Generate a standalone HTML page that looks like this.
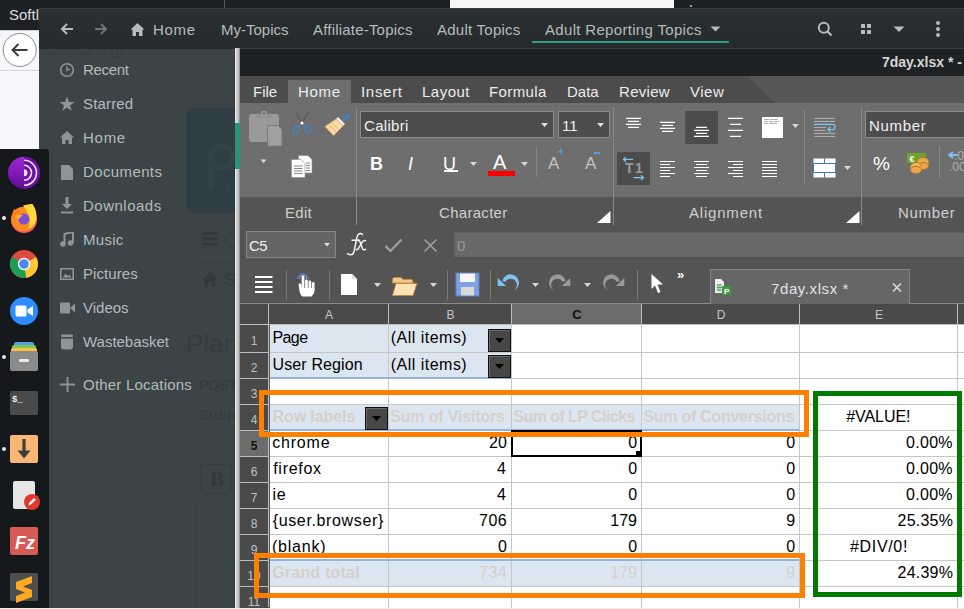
<!DOCTYPE html>
<html><head><meta charset="utf-8">
<style>
*{margin:0;padding:0;box-sizing:border-box}
html,body{width:964px;height:609px;overflow:hidden;background:#3b4547;font-family:"Liberation Sans",sans-serif}
.a{position:absolute}
.t{position:absolute;white-space:nowrap;line-height:1}
</style></head><body>
<!-- browser top bar -->
<div class="a" style="left:0;top:0;width:964px;height:30px;background:#1c2023"></div>
<div class="a" style="left:0;top:30px;width:39px;height:119px;background:#f6f7fb"></div>
<div class="a" style="left:0;top:30px;width:39px;height:1px;background:#d0d0d0"></div>
<div class="t" style="left:9px;top:7px;font-size:15px;color:#dadede">Softl</div>
<div class="a" style="left:450px;top:0;width:224px;height:8px;background:#f6f6f6"></div>
<div class="a" style="left:224px;top:0;width:1px;height:8px;background:#50565a"></div>
<div class="a" style="left:690px;top:5px;width:2px;height:2px;background:#9aa0a0"></div>
<svg class="a" style="left:0;top:30px" width="39" height="42" viewBox="0 30 39 42"><circle cx="19.7" cy="50" r="16.5" fill="#fff" stroke="#8d8d8d" stroke-width="1"/><path d="M27.5 50H13M18.5 44L12.5 50L18.5 56" stroke="#3c3c3c" stroke-width="2" fill="none"/><rect x="0" y="70" width="39" height="1" fill="#d6d6d6"/></svg>

<!-- nautilus header -->
<div class="a" style="left:39px;top:8px;width:925px;height:41px;background:linear-gradient(#2a3032,#252b2d);border-top:1px solid #3a4042"></div>

<!-- nautilus header content -->
<svg class="a" style="left:56px;top:20px" width="22" height="18" viewBox="0 0 22 18"><path d="M17 9H6M11 4L6 9L11 14" stroke="#b4bcbd" stroke-width="2" fill="none"/></svg>
<svg class="a" style="left:90px;top:20px" width="22" height="18" viewBox="0 0 22 18"><path d="M5 9H16M11 4L16 9L11 14" stroke="#6c7476" stroke-width="2" fill="none"/></svg>
<svg class="a" style="left:130px;top:22px" width="15" height="15" viewBox="0 0 15 15"><path d="M7.5 1L14.5 7.5H12.5V14H9V10H6V14H2.5V7.5H0.5Z" fill="#b4bcbd"/></svg>
<div class="t" style="left:153px;top:22px;font-size:15px;letter-spacing:0.7px;color:#b4bcbd">Home</div>
<div class="t" style="left:221px;top:22px;font-size:15px;letter-spacing:0px;color:#b4bcbd">My-Topics</div>
<div class="t" style="left:313px;top:22px;font-size:15px;letter-spacing:0.2px;color:#b4bcbd">Affiliate-Topics</div>
<div class="t" style="left:437px;top:22px;font-size:15px;letter-spacing:0.25px;color:#b4bcbd">Adult Topics</div>
<div class="t" style="left:545px;top:22px;font-size:15px;letter-spacing:0.32px;color:#b4bcbd">Adult Reporting Topics</div>
<svg class="a" style="left:710px;top:26px" width="11" height="6" viewBox="0 0 11 6"><path d="M0.5 0.5H10.5L5.5 5.5Z" fill="#b4bcbd"/></svg>
<div class="a" style="left:532px;top:41px;width:197px;height:2px;background:#2b9a86"></div>
<svg class="a" style="left:814px;top:18px" width="20" height="20" viewBox="0 0 20 20"><circle cx="9.8" cy="9.8" r="5" stroke="#b4bcbd" stroke-width="2" fill="none"/><path d="M13.3 13.3L17.5 17.5" stroke="#b4bcbd" stroke-width="2.2"/></svg>
<svg class="a" style="left:861px;top:24px" width="11" height="11" viewBox="0 0 11 11" fill="#b4bcbd"><rect x="0" y="0" width="4" height="4"/><rect x="6" y="0" width="4" height="4"/><rect x="0" y="6" width="4" height="4"/><rect x="6" y="6" width="4" height="4"/></svg>
<svg class="a" style="left:893px;top:26px" width="12" height="7" viewBox="0 0 12 7"><path d="M0.5 0.5H11.5L6 6Z" fill="#b4bcbd"/></svg>
<svg class="a" style="left:934px;top:20px" width="8" height="18" viewBox="0 0 8 18" fill="#b4bcbd"><circle cx="4" cy="3" r="2"/><circle cx="4" cy="9" r="2"/><circle cx="4" cy="15" r="2"/></svg>
<!-- nautilus sidebar -->
<div class="a" style="left:39px;top:49px;width:196px;height:560px;background:#3b4547"></div>


<!-- page behind (blurred web content) -->
<div class="a" style="left:186px;top:108px;width:60px;height:105px;background:#2f3e45;border-radius:8px"></div>
<svg class="a" style="left:200px;top:135px" width="40" height="60" viewBox="0 0 40 60"><circle cx="22" cy="22" r="11" stroke="#34434a" stroke-width="5.5" fill="none"/><path d="M11 22V54" stroke="#34434a" stroke-width="5.5"/></svg><div class="t" style="left:226px;top:178px;font-size:14px;color:#36444a">c</div>
<div class="a" style="left:186px;top:220px;width:60px;height:86px;border:1px solid #3d4749;border-radius:6px"></div>
<svg class="a" style="left:202px;top:232px" width="16" height="14" viewBox="0 0 16 14" fill="#313b3e"><rect y="0" width="16" height="3"/><rect y="5.3" width="16" height="3"/><rect y="10.6" width="16" height="3"/></svg><div class="a" style="left:198px;top:262px;width:42px;height:1px;background:#353f41"></div>
<div class="t" style="left:224px;top:230px;font-size:19px;color:#343e41">Q</div>
<svg class="a" style="left:202px;top:272px" width="16" height="15" viewBox="0 0 16 15" fill="#313b3e"><path d="M8 0L16 7.5H13.5V15H10V10H6V15H2.5V7.5H0Z"/></svg>
<div class="t" style="left:224px;top:270px;font-size:19px;font-weight:bold;color:#343e41">S</div>
<div class="t" style="left:186px;top:331px;font-size:26px;color:#333d41">Plan</div>
<div class="t" style="left:199px;top:378px;font-size:14px;font-weight:bold;color:#333c40">POST</div>
<div class="t" style="left:199px;top:407px;font-size:15px;font-weight:bold;color:#343d41">Subje</div>
<div class="a" style="left:200px;top:464px;width:32px;height:30px;border:1px solid #343d40;border-radius:4px"></div>
<div class="t" style="left:210px;top:469px;font-size:21px;font-family:'Liberation Serif',serif;font-weight:bold;color:#323b3e">B</div>
<div class="a" style="left:199px;top:499px;width:40px;height:110px;border-left:1px solid #3f494b"></div>

<!-- sidebar items -->
<svg class="a" style="left:45px;top:49px" width="90" height="12" viewBox="45 49 90 12" fill="none" stroke="#353f41" stroke-width="1.4"><path d="M52 57L59 50.5"/><path d="M79.5 50A5 5 0 0 0 89.5 50"/><rect x="112" y="49" width="10" height="8" rx="1"/><path d="M117 50V55"/></svg>
<svg class="a" style="left:59px;top:62px" width="16" height="16" viewBox="0 0 16 16"><circle cx="8" cy="8" r="6.3" stroke="#8c9597" stroke-width="1.6" fill="none"/><path d="M8 4.5V8.3L10.8 6.8" stroke="#8c9597" stroke-width="1.3" fill="none"/></svg>
<svg class="a" style="left:59px;top:96px" width="16" height="16" viewBox="0 0 16 16"><path d="M8 0.5L10 6H15.5L11 9.5L12.8 15L8 11.6L3.2 15L5 9.5L0.5 6H6Z" fill="#8c9597"/></svg>
<svg class="a" style="left:60px;top:131px" width="14" height="13" viewBox="0 0 14 13"><path d="M7 0L14 6.5H12V13H8.5V9H5.5V13H2V6.5H0Z" fill="#8c9597"/></svg>
<svg class="a" style="left:60px;top:165px" width="14" height="15" viewBox="0 0 14 15"><path d="M1 0H9L13 4V15H1Z" fill="#8c9597"/></svg>
<svg class="a" style="left:60px;top:197px" width="14" height="17" viewBox="0 0 14 17"><path d="M5.5 0H8.5V7H12L7 12L2 7H5.5Z" fill="#8c9597"/><rect x="1" y="14.5" width="12" height="2" fill="#8c9597"/></svg>
<svg class="a" style="left:60px;top:232px" width="14" height="15" viewBox="0 0 14 15"><path d="M4 2L13 0V11.5" stroke="#8c9597" stroke-width="2" fill="none"/><circle cx="3" cy="12" r="2.8" fill="#8c9597"/><circle cx="10.5" cy="11" r="2.8" fill="#8c9597"/><rect x="3.5" y="1.5" width="2" height="10" fill="#8c9597"/></svg>
<svg class="a" style="left:60px;top:268px" width="14" height="12" viewBox="0 0 14 12"><path d="M0 0H14V12H0Z M1.6 1.6V10.4H12.4V1.6Z" fill="#8c9597" fill-rule="evenodd"/><path d="M2.5 9.5L5.5 5.5L8 8L9.5 6.5L11.5 9.5Z" fill="#8c9597"/></svg>
<svg class="a" style="left:60px;top:302px" width="15" height="12" viewBox="0 0 15 12"><rect x="0" y="0.5" width="10" height="11" rx="1" fill="#8c9597"/><path d="M10 6L15 1.5V10.5Z" fill="#8c9597"/></svg>
<svg class="a" style="left:60px;top:334px" width="14" height="16" viewBox="0 0 14 16"><rect x="1" y="0.5" width="12" height="2.5" rx="1" fill="#8c9597"/><path d="M1 4.5H13V12.5Q13 15.5 10 15.5H4Q1 15.5 1 12.5Z" fill="#8c9597"/></svg>
<svg class="a" style="left:60px;top:377px" width="15" height="15" viewBox="0 0 15 15"><path d="M7.5 0V15M0 7.5H15" stroke="#8c9597" stroke-width="1.8"/></svg>
<div class="t" style="left:83px;top:62px;font-size:15px;letter-spacing:-0.34px;color:#b3bbbc">Recent</div>
<div class="t" style="left:83px;top:96px;font-size:15px;letter-spacing:0.17px;color:#b3bbbc">Starred</div>
<div class="t" style="left:83px;top:130px;font-size:15px;letter-spacing:0.73px;color:#b3bbbc">Home</div>
<div class="t" style="left:83px;top:164px;font-size:15px;letter-spacing:0.38px;color:#b3bbbc">Documents</div>
<div class="t" style="left:83px;top:198px;font-size:15px;letter-spacing:0.50px;color:#b3bbbc">Downloads</div>
<div class="t" style="left:83px;top:232px;font-size:15px;letter-spacing:0.30px;color:#b3bbbc">Music</div>
<div class="t" style="left:83px;top:266px;font-size:15px;letter-spacing:0.07px;color:#b3bbbc">Pictures</div>
<div class="t" style="left:83px;top:300px;font-size:15px;letter-spacing:0.00px;color:#b3bbbc">Videos</div>
<div class="t" style="left:83px;top:334px;font-size:15px;letter-spacing:-0.02px;color:#b3bbbc">Wastebasket</div>
<div class="t" style="left:83px;top:377px;font-size:15px;letter-spacing:0.21px;color:#b3bbbc">Other Locations</div>
<!-- dock -->
<div class="a" style="left:0;top:149px;width:49px;height:459px;background:#15191c;border-radius:0 3px 0 0"></div>

<!-- dock icons -->
<svg class="a" style="left:0;top:149px" width="49" height="458" viewBox="0 149 49 458">
<defs>
<linearGradient id="tor" x1="0" y1="0" x2="0" y2="1"><stop offset="0" stop-color="#a127dc"/><stop offset="1" stop-color="#620b92"/></linearGradient>
<radialGradient id="ff" cx="0.35" cy="0.7" r="0.8"><stop offset="0" stop-color="#ffbd4f"/><stop offset="0.5" stop-color="#ff8a16"/><stop offset="1" stop-color="#e31587"/></radialGradient>
<linearGradient id="fz" x1="0" y1="0" x2="0" y2="1"><stop offset="0" stop-color="#ffd54a"/><stop offset="1" stop-color="#f77a1b"/></linearGradient>
</defs>
<circle cx="24" cy="172.8" r="16" fill="url(#tor)"/>
<path d="M24 156.8A16 16 0 0 1 24 188.8Z" fill="#6e0fa6"/>
<path d="M24 160.3A12.5 12.5 0 0 1 24 185.3" stroke="#f2e6f8" stroke-width="1.6" fill="none"/>
<path d="M24 165.3A7.5 7.5 0 0 1 24 180.3" stroke="#f2e6f8" stroke-width="1.6" fill="none"/>
<path d="M24 169.3A3.5 3.5 0 0 1 24 176.3Z" fill="#ece0f2"/>
<circle cx="4" cy="218" r="2" fill="#e8e8e8"/>
<circle cx="24" cy="220" r="13" fill="#ff4f6e"/>
<circle cx="23.5" cy="219" r="12.3" fill="#ff8a1e"/>
<path d="M23 205.5Q30 203.5 32.5 204Q37 210 36.5 219Q35 227 28 229Q31 222 29 216Q27 211 23 205.5Z" fill="#ffd93b"/>
<path d="M12 215Q13 210 14.5 208.5L15.5 212L18 209.5L19.5 213Q16 214 13 218Z" fill="#ff7a18"/>
<circle cx="23.8" cy="219" r="5.6" fill="#7b4fd8"/>
<path d="M14 215.5Q19 213.5 23 215.5Q19.5 217 18.5 219.5Q15.5 218 14 215.5Z" fill="#ffab32"/>
<circle cx="24" cy="264" r="14" fill="#dd4b3e"/>
<path d="M24 264L36.1 257A14 14 0 0 1 26 277.9Z" fill="#fcc934"/>
<path d="M24 264L26 277.9A14 14 0 0 1 11.9 257Z" fill="#1e9e54"/>
<path d="M24 264L11.9 257A14 14 0 0 1 10 264Z" fill="#1e9e54"/>
<circle cx="24" cy="264" r="6.2" fill="#fff"/>
<circle cx="24" cy="264" r="4.8" fill="#4a8af4"/>
<circle cx="24" cy="311" r="14" fill="#2d8cff"/>
<rect x="15.5" y="305.5" width="11" height="11" rx="1.5" fill="#fff"/>
<path d="M27.5 309.5L33 306V316L27.5 312.5Z" fill="#fff"/>
<circle cx="4" cy="357" r="2" fill="#e8e8e8"/>
<rect x="14" y="342" width="20" height="5" rx="2" fill="#5b9ce0"/>
<rect x="12" y="345" width="24" height="5" rx="2" fill="#7cc75b"/>
<rect x="11" y="348" width="26" height="5" rx="2" fill="#f7c442"/>
<rect x="10" y="351" width="28" height="20" rx="2" fill="#8b8b8b"/>
<rect x="19" y="359" width="10" height="3" rx="1" fill="#eaeaea"/>
<rect x="10" y="391" width="28" height="24" rx="2" fill="#4a4a4a"/>
<text x="12" y="401.5" font-family="Liberation Mono" font-size="9" font-weight="bold" fill="#eeeeee">$_</text>
<circle cx="4" cy="449" r="2" fill="#e8e8e8"/>
<rect x="10" y="435" width="28" height="28" rx="2" fill="#fbb676"/>
<rect x="22.4" y="439" width="3.2" height="12" fill="#3d3d3d"/><path d="M17.5 450.5H30.5L24 458.5Z" fill="#3d3d3d"/>
<rect x="13" y="481" width="22" height="28" rx="2" fill="#e6e6e6"/>
<circle cx="32" cy="502" r="8" fill="#e03a2f"/>
<path d="M28.5 505.5L29.2 502.8L34 498L35.8 499.8L31 504.6Z" fill="#fff"/>
<rect x="10" y="527" width="28" height="28" rx="2" fill="#d85a55"/>
<text x="15" y="549" font-family="Liberation Sans" font-style="italic" font-weight="bold" font-size="18" fill="#fff">Fz</text>
<rect x="10" y="573" width="28" height="28" rx="2" fill="#4d4d4d"/>
<path d="M16 582L32 576V583L23 586.5L32 590V597L16 603V596L25 592.5L16 589Z" fill="#ffa824"/>
</svg>

<!-- libreoffice -->
<div class="a" style="left:235px;top:48px;width:5px;height:560px;background:linear-gradient(90deg,#e6e6e6,#c4c4c4 60%,#8a8a8a)"></div>
<div class="a" style="left:235px;top:123px;width:5px;height:46px;background:#2a9377"></div>
<div class="a" style="left:0;top:608px;width:964px;height:1px;background:#ececec"></div>
<!-- title bar -->
<div class="a" style="left:240px;top:48px;width:724px;height:28px;background:#1e2224;border-top:1px solid #3a3f42"></div>
<div class="t" style="left:882px;top:55px;font-size:14px;font-weight:bold;color:#d6d6d6">7day.xlsx * -</div>
<!-- menu bar -->
<div class="a" style="left:240px;top:76px;width:724px;height:27px;background:#575757"></div>
<svg class="a" style="left:240px;top:76px" width="540" height="27"><path d="M0 0H508L534 27H0Z" fill="#4c4c4c"/></svg>
<div class="a" style="left:288px;top:80px;width:63px;height:23px;background:#6e6e6e"></div>
<div class="t" style="left:253px;top:84px;font-size:15px;letter-spacing:0px;color:#ececec">File</div>
<div class="t" style="left:298px;top:84px;font-size:15px;letter-spacing:0.7px;color:#ececec">Home</div>
<div class="t" style="left:361px;top:84px;font-size:15px;letter-spacing:0.7px;color:#ececec">Insert</div>
<div class="t" style="left:422px;top:84px;font-size:15px;letter-spacing:0.5px;color:#ececec">Layout</div>
<div class="t" style="left:489px;top:84px;font-size:15px;letter-spacing:0.4px;color:#ececec">Formula</div>
<div class="t" style="left:567px;top:84px;font-size:15px;letter-spacing:0px;color:#ececec">Data</div>
<div class="t" style="left:619px;top:84px;font-size:15px;letter-spacing:0.3px;color:#ececec">Review</div>
<div class="t" style="left:690px;top:84px;font-size:15px;letter-spacing:0.5px;color:#ececec">View</div>
<!-- ribbon -->
<div class="a" style="left:240px;top:103px;width:724px;height:94px;background:#6e6e6e"></div>
<div class="a" style="left:240px;top:197px;width:724px;height:34px;background:#545454"></div>
<div class="a" style="left:240px;top:231px;width:724px;height:73px;background:#545454"></div>

<!-- Edit group -->
<svg class="a" style="left:248px;top:110px" width="36" height="38" viewBox="0 0 36 38">
<rect x="1" y="4" width="30" height="28" rx="3" fill="#9a9a9a"/>
<rect x="8" y="4" width="16" height="4" rx="2" fill="#8e8e8e"/><circle cx="16" cy="4" r="2.5" fill="none" stroke="#9a9a9a" stroke-width="1.5"/>
<path d="M19.5 15.5H30L34 19.5V36H19.5Z" fill="#a0a0a0" stroke="#7a7a7a" stroke-width="1"/>
</svg>
<svg class="a" style="left:291px;top:111px" width="22" height="25" viewBox="0 0 22 25">
<path d="M4.5 1L11 12L17.5 1" stroke="#5c5c5c" stroke-width="1.4" fill="none"/>
<circle cx="11" cy="12" r="1.6" fill="#fff"/>
<ellipse cx="5.5" cy="18.5" rx="2.6" ry="4.2" transform="rotate(25 5.5 18.5)" stroke="#3f86c7" stroke-width="1.4" fill="none"/>
<ellipse cx="16.5" cy="18.5" rx="2.6" ry="4.2" transform="rotate(-25 16.5 18.5)" stroke="#3f86c7" stroke-width="1.4" fill="none"/>
</svg>
<svg class="a" style="left:324px;top:111px" width="27" height="26" viewBox="0 0 27 26">
<path d="M18 9L23.5 2.5L26 5L20 10.5Z" fill="#3f86c7"/>
<path d="M14 6L21 13L19 15L12 8Z" fill="#f2f2f2"/>
<path d="M12 8L19 15L9.5 24.5L1 15.5Z" fill="#fbdca6" stroke="#d9a55e" stroke-width="0.8"/>
<path d="M5 14L12 21M7.5 11.5L14.5 18.5" stroke="#d6a35b" stroke-width="0.7"/>
</svg>
<svg class="a" style="left:260px;top:159px" width="7" height="5"><path d="M0.5 0.5H6.5L3.5 4Z" fill="#dcdcdc"/></svg>
<svg class="a" style="left:291px;top:155px" width="22" height="23" viewBox="0 0 22 23">
<path d="M7.5 0.5H17L21 4.5V18H7.5Z" fill="#fff" stroke="#8a8a8a" stroke-width="0.6"/>
<path d="M0.5 4.5H10L14 8.5V22.5H0.5Z" fill="#fff" stroke="#8a8a8a" stroke-width="0.6"/>
<path d="M3 11H11.5M3 13.5H11.5M3 16H11.5M3 18.5H11.5M15 8H19M15 10.5H19M15 13H19M15 15.5H19" stroke="#777" stroke-width="0.9"/>
</svg>
<div class="a" style="left:356px;top:107px;width:1px;height:118px;background:#8a8a8a"></div>
<!-- Character group -->
<div class="a" style="left:360px;top:111px;width:194px;height:27px;background:#4d4d4d;border:1px solid #8c8c8c"></div>
<div class="t" style="left:364px;top:118px;font-size:15px;letter-spacing:0.3px;color:#f0f0f0">Calibri</div>
<svg class="a" style="left:541px;top:123px" width="7" height="4"><path d="M0 0H7L3.5 4Z" fill="#e0e0e0"/></svg>
<div class="a" style="left:558px;top:111px;width:52px;height:27px;background:#4d4d4d;border:1px solid #8c8c8c"></div>
<div class="t" style="left:562px;top:118px;font-size:15px;color:#f0f0f0">11</div>
<svg class="a" style="left:597px;top:123px" width="7" height="4"><path d="M0 0H7L3.5 4Z" fill="#e0e0e0"/></svg>
<div class="t" style="left:370px;top:155px;font-size:18px;font-weight:bold;color:#fff">B</div>
<div class="t" style="left:408px;top:155px;font-size:18px;font-style:italic;color:#fff">I</div>
<div class="t" style="left:443px;top:155px;font-size:18px;color:#fff">U</div>
<div class="a" style="left:444px;top:170px;width:14px;height:1.5px;background:#fff"></div>
<svg class="a" style="left:470px;top:162px" width="7" height="4"><path d="M0 0H7L3.5 4Z" fill="#d8d8d8"/></svg>
<div class="t" style="left:493px;top:152px;font-size:20px;color:#fff">A</div>
<div class="a" style="left:488px;top:171px;width:27px;height:4.5px;background:#f00"></div>
<svg class="a" style="left:521px;top:162px" width="7" height="4"><path d="M0 0H7L3.5 4Z" fill="#d8d8d8"/></svg>
<div class="a" style="left:536px;top:147px;width:1px;height:30px;background:#888"></div>
<div class="t" style="left:548px;top:155px;font-size:17px;color:#c4c4c4">A</div>
<div class="t" style="left:558px;top:147px;font-size:10px;font-weight:bold;color:#4d9de0">+</div>
<div class="t" style="left:585px;top:155px;font-size:17px;color:#c4c4c4">A</div>
<div class="a" style="left:594px;top:152px;width:6px;height:1.5px;background:#4d9de0"></div>
<div class="a" style="left:613px;top:107px;width:1px;height:118px;background:#8a8a8a"></div>
<!-- Alignment group -->
<div class="a" style="left:685px;top:111px;width:33px;height:33px;background:#4c4c4c"></div>
<div class="a" style="left:617px;top:152px;width:33px;height:33px;background:#4c4c4c"></div>
<svg class="a" style="left:617px;top:107px" width="240" height="80" viewBox="617 107 240 80" stroke="#fff" stroke-width="1.2">
<path d="M626 118.4H641M628 121.4H639M626 124.4H641M628 127.4H639"/>
<path d="M660 122.4H675M662 125.4H673M660 128.4H675M662 131.4H673"/>
<path d="M696 127.4H707M694 130.4H709M696 133.4H707M694 136.4H709"/>
<path d="M728 118.4H743M730 124.4H741M728 130.4H743M730 136.4H741"/>
<rect x="762" y="117" width="21" height="21" fill="#fff" stroke="none"/>
<path d="M764 119.5H769M770 119.5H778M764 121.5H768M769 121.5H773M774 121.5H779M764 123.5H768M769 123.5H777" stroke="#9a9a9a" stroke-width="0.8"/>
<path d="M660 161.5H675M660 164.5H670M660 167.5H675M660 170.5H670M660 173.5H675M660 176.5H670"/>
<path d="M694 161.5H709M696 164.5H707M694 167.5H709M696 170.5H707M694 173.5H709M696 176.5H707"/>
<path d="M728 161.5H743M733 164.5H743M728 167.5H743M733 170.5H743M728 173.5H743M733 176.5H743"/>
<path d="M762 161.5H777M762 164.5H777M762 167.5H777M762 170.5H777M762 173.5H777M762 176.5H777"/>
<path d="M814 118.4H835M814 121.4H835M814 127.4H826M814 130.4H826M814 133.4H835M814 136.4H835" stroke="#b4b4b4" stroke-width="1"/>
<path d="M814 124.4H832.5Q835 124.4 835 127Q835 129.6 832.5 129.6H828M830.5 127L827.8 129.6L830.5 132.2" stroke="#7ec3f0" stroke-width="1.1" fill="none"/>
<rect x="813.5" y="158.5" width="22" height="19" fill="#fff" stroke="none"/>
<path d="M813.5 163.5H835.5V172.5H813.5Z" fill="none" stroke="#2f7fc6" stroke-width="1"/>
<path d="M824.5 158.5V163.5M824.5 172.5V177.5" stroke="#6e6e6e" stroke-width="1"/>
</svg>
<div class="t" style="left:625px;top:161px;font-size:14px;font-weight:bold;letter-spacing:1.5px;color:#9a9a9a">T1</div>
<svg class="a" style="left:617px;top:152px" width="33" height="33" viewBox="617 152 33 33" stroke="#7ec3f0" stroke-width="1.3" fill="none"><path d="M633 159.4H623.5M626 157L623.5 159.4L626 161.8"/><path d="M633.5 177.6H643.5M641 175.2L643.5 177.6L641 180"/></svg>
<svg class="a" style="left:792px;top:124px" width="7" height="4"><path d="M0 0H7L3.5 4Z" fill="#d8d8d8"/></svg>
<div class="a" style="left:804px;top:110px;width:1px;height:75px;background:#888"></div>
<svg class="a" style="left:844px;top:166px" width="7" height="4"><path d="M0 0H7L3.5 4Z" fill="#d8d8d8"/></svg>
<div class="a" style="left:861px;top:107px;width:1px;height:118px;background:#8a8a8a"></div>
<!-- Number group -->
<div class="a" style="left:865px;top:111px;width:110px;height:27px;background:#4d4d4d;border:1px solid #8c8c8c"></div>
<div class="t" style="left:869px;top:118px;font-size:15px;letter-spacing:0.7px;color:#f0f0f0">Number</div>
<div class="t" style="left:873px;top:154px;font-size:19px;color:#fff">%</div>
<svg class="a" style="left:906px;top:152px" width="25" height="22" viewBox="0 0 25 22">
<rect x="1" y="1" width="19" height="10" fill="#6aa52e"/>
<text x="3.5" y="9.5" font-size="9" font-weight="bold" font-family="Liberation Sans" fill="#fff">€</text>
<ellipse cx="17" cy="9" rx="5.5" ry="3.5" fill="#e9a84a" stroke="#b86e20" stroke-width="0.8"/>
<rect x="11.5" y="9" width="11" height="5" fill="#e9a84a"/>
<ellipse cx="17" cy="14" rx="5.5" ry="3.5" fill="#e9a84a" stroke="#b86e20" stroke-width="0.8"/>
<ellipse cx="10" cy="14" rx="5.5" ry="3.5" fill="#f0b25c" stroke="#b86e20" stroke-width="0.8"/>
<rect x="4.5" y="14" width="11" height="4" fill="#e9a84a"/>
<ellipse cx="10" cy="18" rx="5.5" ry="3.5" fill="#e9a84a" stroke="#b86e20" stroke-width="0.8"/>
</svg>
<div class="a" style="left:939px;top:146px;width:1px;height:32px;background:#888"></div>
<svg class="a" style="left:948px;top:151px" width="16" height="8"><path d="M10 4H2M5 1L1.5 4L5 7" stroke="#7ec3f0" stroke-width="2.2" fill="none"/></svg>
<div class="t" style="left:954px;top:150px;font-size:12px;color:#b0b0b0">.0</div>
<div class="t" style="left:949px;top:161px;font-size:12px;color:#b0b0b0">.00</div>
<!-- labels -->
<div class="t" style="left:285px;top:205px;font-size:15px;letter-spacing:0.3px;color:#cfcfcf">Edit</div>
<div class="t" style="left:439px;top:205px;font-size:15px;letter-spacing:0.3px;color:#cfcfcf">Character</div>
<svg class="a" style="left:597px;top:211px" width="14" height="12"><path d="M13.5 0V12H0Z" fill="#fff"/></svg>
<div class="t" style="left:689px;top:205px;font-size:15px;letter-spacing:0.8px;color:#cfcfcf">Alignment</div>
<svg class="a" style="left:846px;top:211px" width="14" height="12"><path d="M13.5 0V12H0Z" fill="#fff"/></svg>
<div class="t" style="left:898px;top:205px;font-size:15px;letter-spacing:0.7px;color:#cfcfcf">Number</div>

<!-- formula bar -->
<div class="a" style="left:246px;top:231px;width:90px;height:27px;background:#656565;border:1px solid #878787"></div>
<div class="t" style="left:249px;top:238px;font-size:15px;letter-spacing:-0.5px;color:#eeeeee">C5</div>
<svg class="a" style="left:324px;top:243px" width="6" height="4"><path d="M0 0H6L3 3.5Z" fill="#e0e0e0"/></svg>
<svg class="a" style="left:340px;top:228px" width="30" height="30" viewBox="340 228 30 30" fill="none" stroke="#f4f4f4" stroke-width="1.5" stroke-linecap="round"><path d="M362.5 234.5Q360.5 232.5 358.5 234.3Q356.8 236 356 242L354.3 250.5Q353.2 255 350.5 254.8Q348.5 254.6 347.5 253.5"/><path d="M352 240.3H359.5"/><path d="M356.8 240.5Q359.3 239.6 360.3 242.5L362.3 248.3Q363.3 250.8 365.5 249.3"/><path d="M365.6 240.8Q364 239.8 362 242.3L359 247.5Q357.8 250.3 356.3 249.5"/></svg>
<svg class="a" style="left:384px;top:238px" width="19" height="15" viewBox="0 0 19 15"><path d="M1.5 8L6.5 13L17.5 1.5" stroke="#a0a0a0" stroke-width="2.2" fill="none"/></svg>
<svg class="a" style="left:423px;top:238px" width="15" height="15" viewBox="0 0 15 15"><path d="M1.5 1.5L13.5 13.5M13.5 1.5L1.5 13.5" stroke="#a0a0a0" stroke-width="1.6"/></svg>
<div class="a" style="left:454px;top:232px;width:520px;height:25px;background:#696969;box-shadow:inset 1px 1px 0 #5f5f5f"></div>
<div class="t" style="left:457px;top:238px;font-size:15px;color:#9a9a9a">0</div>
<!-- toolbar 2 -->
<div class="a" style="left:240px;top:303px;width:724px;height:1px;background:#8c8c8c"></div>
<svg class="a" style="left:255px;top:276px" width="18" height="18" viewBox="0 0 18 18" stroke="#fff" stroke-width="2"><path d="M0 1H17.5M0 6H17.5M0 11H17.5M0 16H17.5"/></svg>
<div class="a" style="left:286px;top:270px;width:1px;height:30px;background:#7a7a7a"></div>
<svg class="a" style="left:290px;top:266px" width="32" height="34" viewBox="290 266 32 34">
<path d="M297.2 279A5.8 5.8 0 0 1 308.8 279" stroke="#4f78b8" stroke-width="1" fill="none"/>
<path d="M299.2 279A3.8 3.8 0 0 1 306.8 279" stroke="#6fa3f2" stroke-width="1.3" fill="none"/>
<rect x="301.6" y="275.5" width="2.8" height="14" rx="1.4" fill="#fff"/>
<rect x="305.1" y="279.5" width="2.7" height="10" rx="1.3" fill="#fff"/>
<rect x="308.5" y="280.5" width="2.7" height="9" rx="1.3" fill="#fff"/>
<rect x="311.9" y="282" width="2.6" height="8" rx="1.3" fill="#fff"/>
<path d="M298.6 284.5Q299.2 282.8 300.5 283.5L301.8 286V288H314.5V291Q314 295 311.5 296.6H302.5Q300.5 295.5 299.6 292Z" fill="#fff"/>
</svg>
<div class="a" style="left:329px;top:270px;width:1px;height:30px;background:#7a7a7a"></div>
<svg class="a" style="left:340px;top:273px" width="18" height="23" viewBox="0 0 18 23"><path d="M1 1H12L17 6V22H1Z" fill="#fff"/><path d="M12 1V6H17" fill="#ddd"/></svg>
<svg class="a" style="left:374px;top:283px" width="7" height="4"><path d="M0 0H7L3.5 4Z" fill="#d8d8d8"/></svg>
<svg class="a" style="left:392px;top:277px" width="26" height="20" viewBox="0 0 26 20"><path d="M0.5 2.5Q0.5 0.5 2.5 0.5H9L11 2.5H19Q21 2.5 21 4.5V6H0.5Z" fill="#f3c98a" stroke="#c68b3f" stroke-width="0.9"/><path d="M0.5 18.5L4 6.5H25L21 18.5Z" fill="#fde3b3" stroke="#c68b3f" stroke-width="0.9"/></svg>
<svg class="a" style="left:430px;top:283px" width="7" height="4"><path d="M0 0H7L3.5 4Z" fill="#d8d8d8"/></svg>
<div class="a" style="left:447px;top:270px;width:1px;height:30px;background:#7a7a7a"></div>
<svg class="a" style="left:455px;top:272px" width="25" height="25" viewBox="0 0 25 25"><path d="M1 1H24V24H1Z" fill="#7da2e4"/><rect x="5" y="1" width="15" height="9" fill="#f4f6fb"/><rect x="6" y="15" width="13" height="9" fill="#d9d9d9"/><path d="M1 1H24V24H1Z" fill="none" stroke="#5d84c8" stroke-width="1"/></svg>
<div class="a" style="left:490px;top:270px;width:1px;height:30px;background:#7a7a7a"></div>
<svg class="a" style="left:490px;top:266px" width="140" height="34" viewBox="490 266 140 34"><path d="M502.4 280.8A8.4 8.4 0 1 1 512.2 291.0A6.2 6.2 0 1 0 505.2 282.1Z" fill="#7ec3f0"/><path d="M497.7 278.1V286.1H506.2Z" fill="#7ec3f0"/><path d="M565.6 280.8A8.4 8.4 0 1 0 555.8 291.0A6.2 6.2 0 1 1 562.8 282.1Z" fill="#9a9a9a"/><path d="M570.3 278.1V286.1H561.8Z" fill="#9a9a9a"/><path d="M619.6 280.8A8.4 8.4 0 1 0 609.8 291.0A6.2 6.2 0 1 1 616.8 282.1Z" fill="#9a9a9a"/><path d="M624.3 278.1V286.1H615.8Z" fill="#9a9a9a"/></svg>
<svg class="a" style="left:532px;top:283px" width="7" height="4"><path d="M0 0H7L3.5 4Z" fill="#d8d8d8"/></svg>
<svg class="a" style="left:584px;top:283px" width="7" height="4"><path d="M0 0H7L3.5 4Z" fill="#d8d8d8"/></svg>
<div class="a" style="left:637px;top:270px;width:1px;height:30px;background:#7a7a7a"></div>
<svg class="a" style="left:650px;top:273px" width="16" height="22" viewBox="0 0 16 22"><path d="M1.5 1V16L5 12.5L8 20L10.5 19L7.5 11.5H13Z" fill="#fff"/></svg>
<div class="t" style="left:677px;top:268px;font-size:13px;font-weight:bold;color:#fff">»</div>
<!-- doc tab -->
<div class="a" style="left:710px;top:269px;width:200px;height:35px;background:#666666;border:1px solid #838383;border-bottom:none"></div>
<svg class="a" style="left:714px;top:278px" width="18" height="18" viewBox="0 0 18 18"><path d="M1 1H7L10 4V15H1Z" fill="#f0f0f0"/><path d="M2.5 7H8M2.5 9.5H8M2.5 12H8M4 6V13.5M6 6V13.5" stroke="#4f9a4f" stroke-width="0.8"/><rect x="8" y="8" width="9" height="9" fill="#3f9a3f"/><text x="10" y="15.5" font-size="8" font-weight="bold" font-family="Liberation Sans" fill="#fff">P</text></svg>
<div class="t" style="left:771px;top:281px;font-size:15px;letter-spacing:0.6px;color:#e2e2e2">7day.xlsx *</div>
<svg class="a" style="left:892px;top:283px" width="10" height="9" viewBox="0 0 10 9"><path d="M1 0.5L9 8.5M9 0.5L1 8.5" stroke="#d6d6d6" stroke-width="1.7"/></svg>
<!-- grid -->
<div class="a" style="left:240px;top:304px;width:724px;height:21px;background:#4a4a4a"></div>
<div class="a" style="left:512px;top:304px;width:129px;height:20px;background:#6c6c6c"></div>
<div class="a" style="left:240px;top:324px;width:724px;height:1px;background:#bdbdbd"></div>
<div class="a" style="left:240px;top:325px;width:28px;height:283px;background:#4a4a4a"></div>
<div class="a" style="left:240px;top:431px;width:28px;height:25px;background:#6c6c6c"></div>
<div class="a" style="left:269px;top:325px;width:695px;height:283px;background:#fff"></div>
<div class="a" style="left:268px;top:304px;width:1px;height:21px;background:#bdbdbd"></div>
<div class="a" style="left:388px;top:304px;width:1px;height:21px;background:#bdbdbd"></div>
<div class="a" style="left:511px;top:304px;width:1px;height:21px;background:#bdbdbd"></div>
<div class="a" style="left:641px;top:304px;width:1px;height:21px;background:#bdbdbd"></div>
<div class="a" style="left:799px;top:304px;width:1px;height:21px;background:#bdbdbd"></div>
<div class="a" style="left:957px;top:304px;width:1px;height:21px;background:#bdbdbd"></div>
<div class="a" style="left:240px;top:352px;width:28px;height:1px;background:#bdbdbd"></div>
<div class="a" style="left:240px;top:378px;width:28px;height:1px;background:#bdbdbd"></div>
<div class="a" style="left:240px;top:404px;width:28px;height:1px;background:#bdbdbd"></div>
<div class="a" style="left:240px;top:430px;width:28px;height:1px;background:#bdbdbd"></div>
<div class="a" style="left:240px;top:456px;width:28px;height:1px;background:#bdbdbd"></div>
<div class="a" style="left:240px;top:482px;width:28px;height:1px;background:#bdbdbd"></div>
<div class="a" style="left:240px;top:508px;width:28px;height:1px;background:#bdbdbd"></div>
<div class="a" style="left:240px;top:534px;width:28px;height:1px;background:#bdbdbd"></div>
<div class="a" style="left:240px;top:560px;width:28px;height:1px;background:#bdbdbd"></div>
<div class="a" style="left:240px;top:586px;width:28px;height:1px;background:#bdbdbd"></div>
<div class="a" style="left:268px;top:304px;width:1px;height:303px;background:#bdbdbd"></div>
<div class="a" style="left:269px;top:325px;width:242px;height:53px;background:#dce6f1"></div>
<div class="a" style="left:269px;top:404px;width:530px;height:26px;background:#dce6f1"></div>
<div class="a" style="left:269px;top:560px;width:530px;height:26px;background:#dce6f1"></div>
<div class="a" style="left:388px;top:325px;width:1px;height:283px;background:#c6c6c6"></div>
<div class="a" style="left:511px;top:325px;width:1px;height:283px;background:#c6c6c6"></div>
<div class="a" style="left:641px;top:325px;width:1px;height:283px;background:#c6c6c6"></div>
<div class="a" style="left:799px;top:325px;width:1px;height:283px;background:#c6c6c6"></div>
<div class="a" style="left:957px;top:325px;width:1px;height:283px;background:#c6c6c6"></div>
<div class="a" style="left:269px;top:352px;width:695px;height:1px;background:#c6c6c6"></div>
<div class="a" style="left:269px;top:378px;width:695px;height:1px;background:#c6c6c6"></div>
<div class="a" style="left:269px;top:404px;width:695px;height:1px;background:#c6c6c6"></div>
<div class="a" style="left:269px;top:430px;width:695px;height:1px;background:#c6c6c6"></div>
<div class="a" style="left:269px;top:456px;width:695px;height:1px;background:#c6c6c6"></div>
<div class="a" style="left:269px;top:482px;width:695px;height:1px;background:#c6c6c6"></div>
<div class="a" style="left:269px;top:508px;width:695px;height:1px;background:#c6c6c6"></div>
<div class="a" style="left:269px;top:534px;width:695px;height:1px;background:#c6c6c6"></div>
<div class="a" style="left:269px;top:560px;width:695px;height:1px;background:#c6c6c6"></div>
<div class="a" style="left:269px;top:586px;width:695px;height:1px;background:#c6c6c6"></div>
<div class="a" style="left:269px;top:377px;width:242px;height:2px;background:#95b3d7"></div>
<div class="a" style="left:269px;top:429px;width:530px;height:2px;background:#95b3d7"></div>
<div class="a" style="left:269px;top:559px;width:530px;height:2px;background:#95b3d7"></div>
<div class="t" style="left:269px;width:120px;top:309px;text-align:center;font-size:12px;color:#c6c6c6">A</div>
<div class="t" style="left:389px;width:123px;top:309px;text-align:center;font-size:12px;color:#c6c6c6">B</div>
<div class="t" style="left:642px;width:158px;top:309px;text-align:center;font-size:12px;color:#c6c6c6">D</div>
<div class="t" style="left:800px;width:158px;top:309px;text-align:center;font-size:12px;color:#c6c6c6">E</div>
<div class="t" style="left:512px;width:130px;top:308px;text-align:center;font-size:13px;font-weight:bold;color:#111">C</div>
<div class="t" style="left:240px;width:28px;top:335px;text-align:center;font-size:12px;color:#c0c0c0">1</div>
<div class="t" style="left:240px;width:28px;top:362px;text-align:center;font-size:12px;color:#c0c0c0">2</div>
<div class="t" style="left:240px;width:28px;top:388px;text-align:center;font-size:12px;color:#c0c0c0">3</div>
<div class="t" style="left:240px;width:28px;top:414px;text-align:center;font-size:12px;color:#c0c0c0">4</div>
<div class="t" style="left:240px;width:28px;top:440px;text-align:center;font-size:12px;font-weight:bold;color:#111">5</div>
<div class="t" style="left:240px;width:28px;top:466px;text-align:center;font-size:12px;color:#c0c0c0">6</div>
<div class="t" style="left:240px;width:28px;top:492px;text-align:center;font-size:12px;color:#c0c0c0">7</div>
<div class="t" style="left:240px;width:28px;top:518px;text-align:center;font-size:12px;color:#c0c0c0">8</div>
<div class="t" style="left:240px;width:28px;top:544px;text-align:center;font-size:12px;color:#c0c0c0">9</div>
<div class="t" style="left:240px;width:28px;top:570px;text-align:center;font-size:12px;color:#c0c0c0">10</div>
<div class="t" style="left:240px;width:28px;top:596px;text-align:center;font-size:12px;color:#c0c0c0">11</div>
<!-- cells -->
<div class="t" style="left:272.5px;top:330px;font-size:16px;letter-spacing:-0.60px;color:#000">Page</div>
<div class="t" style="left:390.7px;top:330px;font-size:16px;letter-spacing:0.49px;color:#000">(All items)</div>
<div class="t" style="left:272.5px;top:357px;font-size:16px;letter-spacing:0.13px;color:#000">User Region</div>
<div class="t" style="left:390.7px;top:357px;font-size:16px;letter-spacing:0.49px;color:#000">(All items)</div>
<div class="t" style="left:272.5px;top:409px;font-size:16px;letter-spacing:-0.10px;font-weight:bold;color:#d4d0cc">Row labels</div>
<div class="t" style="left:390.2px;top:409px;font-size:16px;letter-spacing:-0.16px;font-weight:bold;color:#d4d0cc">Sum of Visitors</div>
<div class="t" style="left:513.3px;top:409px;font-size:16px;letter-spacing:-0.55px;font-weight:bold;color:#d4d0cc">Sum of LP Clicks</div>
<div class="t" style="left:643.4px;top:409px;font-size:16px;letter-spacing:-0.27px;font-weight:bold;color:#d4d0cc">Sum of Conversions</div>
<div class="t" style="left:846.3px;top:409px;font-size:16px;letter-spacing:-0.08px;color:#000">#VALUE!</div>
<div class="t" style="left:272.2px;top:435px;font-size:16px;letter-spacing:0.80px;color:#000">chrome</div>
<div class="t" style="left:489.0px;top:435px;font-size:16px;color:#000">20</div>
<div class="t" style="left:628.3px;top:435px;font-size:16px;color:#000">0</div>
<div class="t" style="left:786.3px;top:435px;font-size:16px;color:#000">0</div>
<div class="t" style="left:906.0px;top:435px;font-size:16px;letter-spacing:0.30px;color:#000">0.00%</div>
<div class="t" style="left:273.2px;top:461px;font-size:16px;letter-spacing:0.72px;color:#000">firefox</div>
<div class="t" style="left:497.0px;top:461px;font-size:16px;color:#000">4</div>
<div class="t" style="left:628.3px;top:461px;font-size:16px;color:#000">0</div>
<div class="t" style="left:786.3px;top:461px;font-size:16px;color:#000">0</div>
<div class="t" style="left:906.0px;top:461px;font-size:16px;letter-spacing:0.30px;color:#000">0.00%</div>
<div class="t" style="left:272.5px;top:487px;font-size:16px;letter-spacing:0.80px;color:#000">ie</div>
<div class="t" style="left:497.0px;top:487px;font-size:16px;color:#000">4</div>
<div class="t" style="left:628.3px;top:487px;font-size:16px;color:#000">0</div>
<div class="t" style="left:786.3px;top:487px;font-size:16px;color:#000">0</div>
<div class="t" style="left:906.0px;top:487px;font-size:16px;letter-spacing:0.30px;color:#000">0.00%</div>
<div class="t" style="left:272.7px;top:513px;font-size:16px;letter-spacing:0.64px;color:#000">{user.browser}</div>
<div class="t" style="left:479.0px;top:513px;font-size:16px;letter-spacing:0.50px;color:#000">706</div>
<div class="t" style="left:610.3px;top:513px;font-size:16px;color:#000">179</div>
<div class="t" style="left:786.3px;top:513px;font-size:16px;color:#000">9</div>
<div class="t" style="left:897.6px;top:513px;font-size:16px;letter-spacing:0.20px;color:#000">25.35%</div>
<div class="t" style="left:272.0px;top:539px;font-size:16px;letter-spacing:0.77px;color:#000">(blank)</div>
<div class="t" style="left:498.0px;top:539px;font-size:16px;color:#000">0</div>
<div class="t" style="left:628.3px;top:539px;font-size:16px;color:#000">0</div>
<div class="t" style="left:786.3px;top:539px;font-size:16px;color:#000">0</div>
<div class="t" style="left:850.0px;top:539px;font-size:16px;letter-spacing:0.67px;color:#000">#DIV/0!</div>
<div class="t" style="left:272.2px;top:565px;font-size:16px;letter-spacing:0.21px;font-weight:bold;color:#d4d0cc">Grand total</div>
<div class="t" style="left:479.0px;top:565px;font-size:16px;letter-spacing:0.50px;color:#d4d0cc">734</div>
<div class="t" style="left:610.3px;top:565px;font-size:16px;color:#d4d0cc">179</div>
<div class="t" style="left:786.3px;top:565px;font-size:16px;color:#d4d0cc">9</div>
<div class="t" style="left:897.6px;top:565px;font-size:16px;letter-spacing:0.20px;color:#000">24.39%</div>
<!-- /cells -->
<!-- overlays -->
<div class="a" style="left:269px;top:325px;width:1px;height:283px;background:#5a5a5a"></div>
<div class="a" style="left:488px;top:329px;width:23px;height:23px;background:#474846;border:1px solid #111;box-shadow:inset 1px 1px 0 #6a6a6a"></div>
<svg class="a" style="left:495px;top:338px" width="9" height="5"><path d="M0 0H9L4.5 5Z" fill="#000"/></svg>
<div class="a" style="left:488px;top:355px;width:23px;height:23px;background:#474846;border:1px solid #111;box-shadow:inset 1px 1px 0 #6a6a6a"></div>
<svg class="a" style="left:495px;top:364px" width="9" height="5"><path d="M0 0H9L4.5 5Z" fill="#000"/></svg>
<div class="a" style="left:365px;top:407px;width:23px;height:23px;background:#474846;border:1px solid #111;box-shadow:inset 1px 1px 0 #6a6a6a"></div>
<svg class="a" style="left:372px;top:416px" width="9" height="5"><path d="M0 0H9L4.5 5Z" fill="#000"/></svg>
<div class="a" style="left:511px;top:430px;width:131px;height:27px;border:2px solid #000"></div>
<div class="a" style="left:636px;top:451px;width:6px;height:6px;background:#000;border:1px solid #fff;border-width:0"></div>
<div class="a" style="left:259px;top:390px;width:550px;height:47px;border:5px solid #ff8000"></div>
<div class="a" style="left:254px;top:553px;width:551px;height:45px;border:5px solid #ff8000"></div>
<div class="a" style="left:813px;top:391px;width:149px;height:206px;border:5px solid #007a00"></div>
</body></html>
